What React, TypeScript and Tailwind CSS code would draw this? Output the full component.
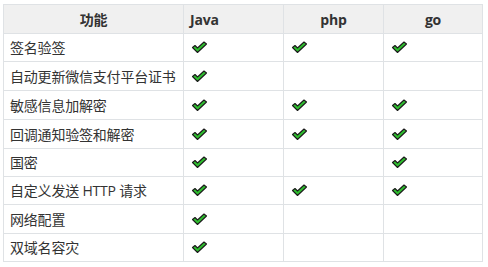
const rows: { name: string; java: boolean; php: boolean; go: boolean; h: string }[] = [
  { name: "签名验签", java: true, php: true, go: true, h: "h-[28px]" },
  { name: "自动更新微信支付平台证书", java: true, php: false, go: false, h: "h-[29px]" },
  { name: "敏感信息加解密", java: true, php: true, go: true, h: "h-[29px]" },
  { name: "回调通知验签和解密", java: true, php: true, go: true, h: "h-[29px]" },
  { name: "国密", java: true, php: false, go: true, h: "h-[28px]" },
  { name: "自定义发送 HTTP 请求", java: true, php: true, go: true, h: "h-[28px]" },
  { name: "网络配置", java: true, php: false, go: false, h: "h-[29px]" },
  { name: "双域名容灾", java: true, php: false, go: false, h: "h-[28px]" },
];

function Check() {
  return (
    <svg width="17" height="13" viewBox="0 0 17 13" className="ml-[1px]">
      <path
        d="M1.5 6.5 L4 4.5 L6.5 7 L13 1 L15.5 3 L6.5 11.5 Z"
        fill="#2fbf2f"
        stroke="#1a1a1a"
        strokeWidth="1.1"
        strokeLinejoin="round"
      />
    </svg>
  );
}

function Cell({ on, w }: { on: boolean; w: string }) {
  return (
    <div className={`${w} flex items-center border-r border-[#dfe2e5] pl-[6px]`}>
      {on && <Check />}
    </div>
  );
}

export default function App() {
  return (
    <div className="min-h-screen bg-white pl-[3px] pt-[4px] text-[#333] text-[14px] tracking-[-0.2px] [font-family:'Open_Sans','Noto_Sans_CJK_SC',sans-serif]">
      <div className="w-[480px] border-l border-t border-[#dfe2e5]">
        <div className="flex h-[29px] border-b border-[#dfe2e5] bg-[#f0f0f0] font-bold">
          <div className="flex w-[180px] items-center justify-center border-r border-[#dfe2e5]">功能</div>
          <div className="flex w-[100px] items-center border-r border-[#dfe2e5] pl-[6px]">Java</div>
          <div className="flex w-[100px] items-center justify-center border-r border-[#dfe2e5]">php</div>
          <div className="flex w-[99px] items-center justify-center border-r border-[#dfe2e5]">go</div>
        </div>
        {rows.map((r) => (
          <div key={r.name} className={`flex ${r.h} border-b border-[#dfe2e5]`}>
            <div className="flex w-[180px] items-center border-r border-[#dfe2e5] pl-[6px]">{r.name}</div>
            <Cell on={r.java} w="w-[100px]" />
            <Cell on={r.php} w="w-[100px]" />
            <Cell on={r.go} w="w-[99px]" />
          </div>
        ))}
      </div>
    </div>
  );
}
